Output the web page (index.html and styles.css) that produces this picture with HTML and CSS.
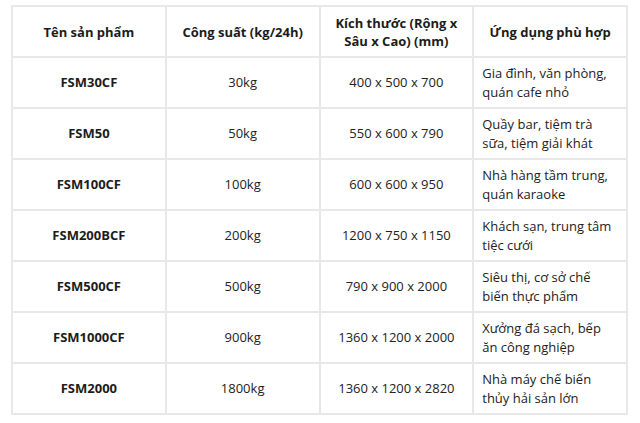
FILE: index.html
```html
<!DOCTYPE html>
<html lang="vi">
<head>
<meta charset="utf-8">
<link rel="stylesheet" href="styles.css">
</head>
<body>
<table class="spec">
  <thead>
    <tr><th>Tên sản phẩm</th><th>Công suất (kg/24h)</th><th>Kích thước (Rộng x Sâu x Cao) (mm)</th><th>Ứng dụng phù hợp</th></tr>
  </thead>
  <tbody>
    <tr><td class="name">FSM30CF</td><td>30kg</td><td>400 x 500 x 700</td><td class="use">Gia đình, văn phòng, quán cafe nhỏ</td></tr>
    <tr><td class="name">FSM50</td><td>50kg</td><td>550 x 600 x 790</td><td class="use">Quầy bar, tiệm trà sữa, tiệm giải khát</td></tr>
    <tr><td class="name">FSM100CF</td><td>100kg</td><td>600 x 600 x 950</td><td class="use">Nhà hàng tầm trung, quán karaoke</td></tr>
    <tr><td class="name">FSM200BCF</td><td>200kg</td><td>1200 x 750 x 1150</td><td class="use">Khách sạn, trung tâm tiệc cưới</td></tr>
    <tr><td class="name">FSM500CF</td><td>500kg</td><td>790 x 900 x 2000</td><td class="use">Siêu thị, cơ sở chế biến thực phẩm</td></tr>
    <tr><td class="name">FSM1000CF</td><td>900kg</td><td>1360 x 1200 x 2000</td><td class="use">Xưởng đá sạch, bếp ăn công nghiệp</td></tr>
    <tr><td class="name">FSM2000</td><td>1800kg</td><td>1360 x 1200 x 2820</td><td class="use">Nhà máy chế biến thủy hải sản lớn</td></tr>
  </tbody>
</table>
</body>
</html>
```

FILE: styles.css
```css
html, body {
  margin: 0;
  padding: 0;
  background: #ffffff;
}
body {
  padding: 5px 0 0 11px;
  font-family: "Open Sans", "Noto Sans", sans-serif;
  font-size: 13px;
  color: #222222;
}
.spec {
  border-collapse: collapse;
  width: 617px;
  table-layout: fixed;
}
.spec th, .spec td {
  border: 2px solid #e8e8e8;
  height: 47px;
  padding: 1px 8px;
  text-align: center;
  vertical-align: middle;
  line-height: 19px;
}
.spec th {
  font-weight: 700;
  line-height: 18px;
  color: #1c1c1c;
}
.spec td.name {
  font-weight: 700;
  color: #1c1c1c;
}
.spec td.use {
  text-align: left;
}
```
